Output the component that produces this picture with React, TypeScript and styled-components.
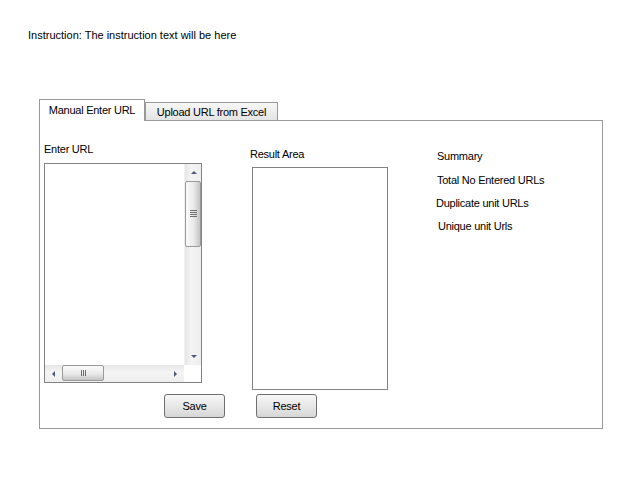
import React from "react";
import styled, { createGlobalStyle } from "styled-components";

const GlobalStyle = createGlobalStyle`
  html, body { margin: 0; padding: 0; background: #ffffff; }
  body {
    font-family: "Liberation Sans", Arial, sans-serif;
    font-size: 11px;
    letter-spacing: -0.25px;
    color: #000000;
  }
  * { box-sizing: border-box; }
`;

const Page = styled.div`
  width: 640px;
  height: 480px;
  padding: 29px 0 0 28px;
`;

const Instruction = styled.div`
  line-height: 13px;
  letter-spacing: 0;
`;

const TabsArea = styled.div`
  margin: 57px 0 0 11px;
  width: 564px;
`;

const TabList = styled.div`
  display: flex;
  align-items: flex-end;
  margin-bottom: -1px;
  position: relative;
  z-index: 1;
`;

const Tab = styled.div<{ $active?: boolean; $width: number }>`
  width: ${(p) => p.$width}px;
  height: ${(p) => (p.$active ? 22 : 19)}px;
  display: flex;
  align-items: center;
  justify-content: center;
  line-height: 13px;
  border: 1px solid #999999;
  border-bottom: ${(p) => (p.$active ? "none" : "1px solid #999999")};
  background: ${(p) =>
    p.$active ? "#ffffff" : "linear-gradient(#f7f7f7, #e4e4e4)"};
  padding-top: ${(p) => (p.$active ? 0 : 1)}px;
`;

const Panel = styled.div`
  width: 564px;
  height: 309px;
  border: 1px solid #999999;
  padding: 22px 0 0 4px;
`;

const Columns = styled.div`
  display: flex;
  align-items: flex-start;
`;

const LeftCol = styled.div`
  display: flex;
  flex-direction: column;
  width: 158px;
`;

const MiddleCol = styled.div`
  display: flex;
  flex-direction: column;
  margin-left: 50px;
  padding-top: 5px;
`;

const RightCol = styled.div`
  display: flex;
  flex-direction: column;
  margin-left: 48px;
  padding-top: 7px;
`;

const Label = styled.div<{ $shift?: number }>`
  line-height: 13px;
  margin-left: ${(p) => p.$shift ?? 0}px;
`;

const SummaryItem = styled.div<{ $indent: number; $gap: number }>`
  line-height: 13px;
  padding-left: ${(p) => p.$indent}px;
  margin-bottom: ${(p) => p.$gap}px;
`;

const ScrollBox = styled.div`
  margin-top: 7px;
  width: 158px;
  height: 220px;
  border: 1px solid #828282;
  display: grid;
  grid-template-columns: 139px 17px;
  grid-template-rows: 201px 17px;
  background: #ffffff;
`;

const VBar = styled.div`
  display: flex;
  flex-direction: column;
  background: linear-gradient(to right, #e6e6e6, #f4f4f4 40%, #eeeeee);
  border-left: 1px solid #f0f0f0;
`;

const HBar = styled.div`
  display: flex;
  flex-direction: row;
  background: linear-gradient(#e6e6e6, #f4f4f4 40%, #eeeeee);
`;

const Corner = styled.div`
  background: #ffffff;
`;

const ArrowBtn = styled.div`
  width: 17px;
  height: 17px;
  flex: none;
  display: flex;
  align-items: center;
  justify-content: center;
`;

const Track = styled.div<{ $vertical?: boolean }>`
  flex: 1;
  display: flex;
  flex-direction: ${(p) => (p.$vertical ? "column" : "row")};
`;

const Thumb = styled.div<{ $vertical?: boolean; $length: number }>`
  ${(p) =>
    p.$vertical
      ? `width: 16px; height: ${p.$length}px;`
      : `height: 16px; width: ${p.$length}px;`}
  border: 1px solid #9a9a9a;
  border-radius: 2px;
  background: ${(p) =>
    p.$vertical
      ? "linear-gradient(to right, #fbfbfb, #eaeaea 55%, #c4c4c4)"
      : "linear-gradient(#fbfbfb, #eaeaea 55%, #c4c4c4)"};
  display: flex;
  align-items: center;
  justify-content: center;
`;

const ResultBox = styled.div`
  margin-top: 6px;
  width: 136px;
  height: 223px;
  border: 1px solid #828282;
`;

const ButtonRow = styled.div`
  display: flex;
  margin-top: 4px;
`;

const Button = styled.button<{ $offset: number }>`
  margin-left: ${(p) => p.$offset}px;
  width: 61px;
  height: 24px;
  border: 1px solid #707070;
  border-radius: 3px;
  background: linear-gradient(#f6f6f6, #e8e8e8 50%, #d6d6d6);
  font-family: "Liberation Sans", Arial, sans-serif;
  font-size: 11px;
  letter-spacing: -0.25px;
  color: #000000;
  padding: 0;
`;

const Arrow = ({ dir }: { dir: "up" | "down" | "left" | "right" }) => {
  const pts = {
    up: "1,4 4,1 7,4",
    down: "1,1 4,4 7,1",
    left: "4,1 1,4 4,7",
    right: "1,1 4,4 1,7",
  }[dir];
  const vertical = dir === "up" || dir === "down";
  return (
    <svg
      width={vertical ? 8 : 5}
      height={vertical ? 5 : 8}
      viewBox={vertical ? "0 0 8 5" : "0 0 5 8"}
    >
      <polygon points={pts} fill="#4a5a78" />
    </svg>
  );
};

const GripV = () => (
  <svg width="7" height="8" viewBox="0 0 7 8">
    {[0.5, 2.5, 4.5, 6.5].map((y) => (
      <line key={y} x1="0" y1={y} x2="7" y2={y} stroke="#6e6e6e" strokeWidth="1" />
    ))}
  </svg>
);

const GripH = () => (
  <svg width="5" height="6" viewBox="0 0 5 6">
    {[0.5, 2.5, 4.5].map((x) => (
      <line key={x} x1={x} y1="0" x2={x} y2="6" stroke="#6e6e6e" strokeWidth="1" />
    ))}
  </svg>
);

export default function App() {
  return (
    <>
      <GlobalStyle />
      <Page>
        <Instruction>Instruction: The instruction text will be here</Instruction>
        <TabsArea>
          <TabList>
            <Tab $active $width={106}>Manual Enter URL</Tab>
            <Tab $width={133}>Upload URL from Excel</Tab>
          </TabList>
          <Panel>
            <Columns>
              <LeftCol>
                <Label>Enter URL</Label>
                <ScrollBox>
                  <div />
                  <VBar>
                    <ArrowBtn>
                      <Arrow dir="up" />
                    </ArrowBtn>
                    <Track $vertical>
                      <Thumb $vertical $length={66}>
                        <GripV />
                      </Thumb>
                    </Track>
                    <ArrowBtn>
                      <Arrow dir="down" />
                    </ArrowBtn>
                  </VBar>
                  <HBar>
                    <ArrowBtn>
                      <Arrow dir="left" />
                    </ArrowBtn>
                    <Track>
                      <Thumb $length={42}>
                        <GripH />
                      </Thumb>
                    </Track>
                    <ArrowBtn>
                      <Arrow dir="right" />
                    </ArrowBtn>
                  </HBar>
                  <Corner />
                </ScrollBox>
              </LeftCol>
              <MiddleCol>
                <Label $shift={-2}>Result Area</Label>
                <ResultBox />
              </MiddleCol>
              <RightCol>
                <SummaryItem $indent={1} $gap={11}>Summary</SummaryItem>
                <SummaryItem $indent={1} $gap={10}>Total No Entered URLs</SummaryItem>
                <SummaryItem $indent={0} $gap={10}>Duplicate unit URLs</SummaryItem>
                <SummaryItem $indent={2} $gap={0}>Unique unit Urls</SummaryItem>
              </RightCol>
            </Columns>
            <ButtonRow>
              <Button $offset={120}>Save</Button>
              <Button $offset={31}>Reset</Button>
            </ButtonRow>
          </Panel>
        </TabsArea>
      </Page>
    </>
  );
}
